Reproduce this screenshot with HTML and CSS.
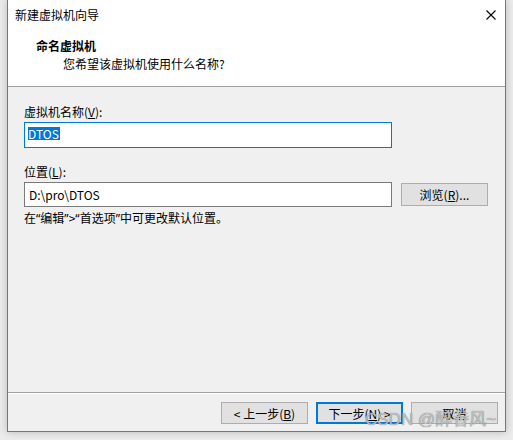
FILE: index.html
```html
<!DOCTYPE html>
<html lang="zh">
<head>
<meta charset="utf-8">
<link rel="stylesheet" href="styles.css">
</head>
<body>
<div class="desk">
  <div class="win">
    <div class="head">
      <div class="titlebar">
        <span class="title">新建虚拟机向导</span>
        <svg class="close" width="10" height="10" viewBox="0 0 10 10"><path d="M0.5 0.5 L9.5 9.5 M9.5 0.5 L0.5 9.5" stroke="#000" stroke-width="1.1" fill="none"/></svg>
      </div>
      <div class="h1">命名虚拟机</div>
      <div class="h2">您希望该虚拟机使用什么名称?</div>
    </div>
    <div class="main">
      <div class="label">虚拟机名称(<u>V</u>):</div>
      <div class="field field-name"><span class="sel">DTOS</span></div>
      <div class="label label2">位置(<u>L</u>):</div>
      <div class="row">
        <div class="field field-loc">D:\pro\DTOS</div>
        <div class="btn btn-browse">浏览(<u>R</u>)...</div>
      </div>
      <div class="hint">在<span class="q">“</span>编辑<span class="q">”</span>&gt;<span class="q">“</span>首选项<span class="q">”</span>中可更改默认位置。</div>
    </div>
    <div class="foot">
      <div class="btn">&lt; 上一步(<u>B</u>)</div>
      <div class="btn btn-focus">下一步(<u>N</u>) &gt;</div>
      <div class="btn">取消</div>
    </div>
  </div>
  <div class="wm">CSDN @醉眷风~</div>
</div>
</body>
</html>
```

FILE: styles.css
```css
html, body {
  margin: 0;
  padding: 0;
}
body {
  background: #ececec;
  font-family: "Segoe UI", "Noto Sans CJK SC", sans-serif;
  font-size: 12px;
  color: #000;
}
.desk {
  position: relative;
  width: 513px;
  height: 440px;
  padding-left: 7px;
  box-sizing: border-box;
  overflow: hidden;
}
.win {
  width: 499px;
  height: 432px;
  box-sizing: border-box;
  border: 1px solid #777;
  border-top: none;
  background: #f0f0f0;
  display: flex;
  flex-direction: column;
  box-shadow: 0 0 8px rgba(0, 0, 0, 0.22);
}
.head {
  background: #fff;
  height: 86px;
  border-bottom: 1px solid #a0a0a0;
  flex: none;
}
.titlebar {
  height: 30px;
  display: flex;
  align-items: center;
  justify-content: space-between;
  padding: 0 9px 0 7px;
}
.title {
  line-height: 30px;
}
.close {
  display: block;
}
.h1 {
  margin-top: 7px;
  padding-left: 28px;
  line-height: 18px;
  font-weight: bold;
}
.h2 {
  padding-left: 55px;
  line-height: 18px;
}
.main {
  flex: 1;
  padding: 16px 0 0 16px;
}
.label {
  line-height: 18px;
}
.label2 {
  margin-top: 15px;
}
.field {
  box-sizing: border-box;
  width: 368px;
  background: #fff;
  display: flex;
  align-items: center;
  margin-top: 1px;
}
.field-name {
  height: 26px;
  border: 1px solid #0078d7;
  padding-left: 3px;
}
.sel {
  background: #0078d7;
  color: #fff;
  line-height: 13px;
  padding: 0 1px 0 0;
  margin-top: -3px;
}
.row {
  display: flex;
  align-items: center;
  gap: 9px;
  margin-top: 1px;
}
.field-loc {
  height: 25px;
  border: 1px solid #7a7a7a;
  padding-left: 4px;
  margin-top: 0;
}
.btn {
  box-sizing: border-box;
  width: 87px;
  height: 22px;
  background: #e1e1e1;
  border: 1px solid #adadad;
  display: flex;
  align-items: center;
  justify-content: center;
}
.btn-browse {
  height: 23px;
}
.btn-focus {
  border: 2px solid #0078d7;
}
.hint {
  margin-top: 2px;
  line-height: 18px;
}
.q {
  font-family: "Noto Sans", sans-serif;
}
.foot {
  flex: none;
  border-top: 1px solid #a0a0a0;
  box-shadow: inset 0 1px 0 #fff;
  padding: 9px 7px 7px 0;
  display: flex;
  justify-content: flex-end;
  gap: 8px;
}
.wm {
  position: absolute;
  left: 365px;
  top: 410px;
  font-family: "Liberation Sans", "Noto Sans CJK SC", sans-serif;
  font-size: 17px;
  line-height: 20px;
  color: rgba(205, 205, 205, 0.85);
  text-shadow: 0 0 1px rgba(70, 70, 70, 0.8);
  white-space: nowrap;
}
```
